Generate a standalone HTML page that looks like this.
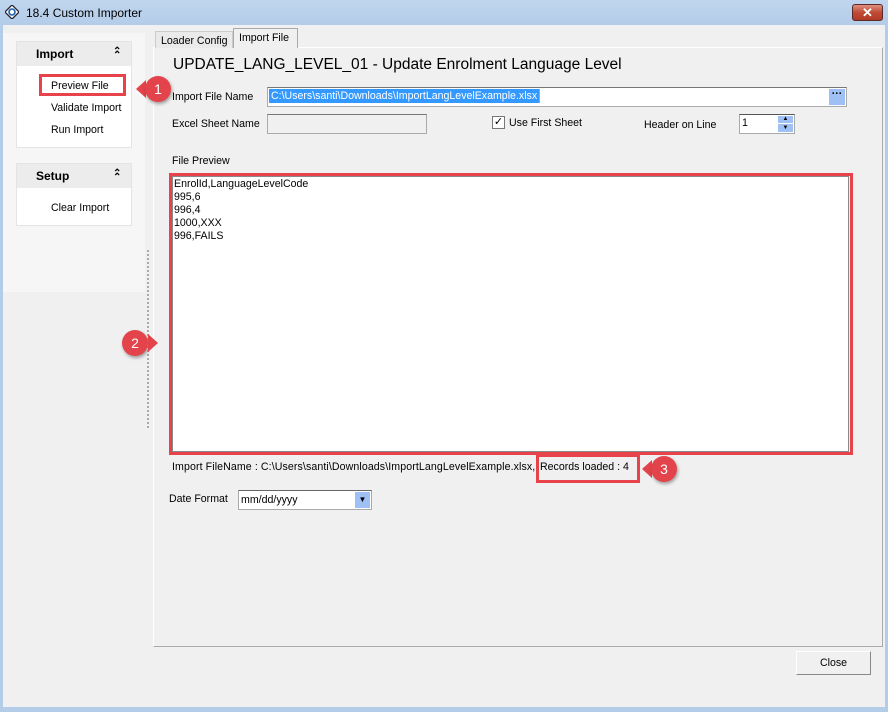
<!DOCTYPE html>
<html><head><style>
*{margin:0;padding:0;box-sizing:border-box}
body{width:888px;height:712px;background:#f0f0f0;font-family:"Liberation Sans",sans-serif;font-size:10.6px;color:#000;position:relative;overflow:hidden}
.a{position:absolute}
.red{position:absolute;border:3px solid #e8434a;z-index:5}
.badge{position:absolute;width:26px;height:26px;border-radius:50%;background:#e3434b;color:#fff;font-size:14px;text-align:center;line-height:26px;box-shadow:1px 2px 3px rgba(0,0,0,.35);z-index:6}
.tri{position:absolute;width:0;height:0;border-top:9px solid transparent;border-bottom:9px solid transparent;border-right:10px solid #e3434b;z-index:6}
</style></head><body>
<div class="a" style="left:0;top:0;width:888px;height:25px;background:linear-gradient(#c0d6ee,#b3cce8)"></div>
<div class="a" style="left:885px;top:25px;width:3px;height:687px;background:#b3cce8"></div>
<div class="a" style="left:0;top:25px;width:3px;height:687px;background:#b3cce8"></div>
<div class="a" style="left:0;top:707px;width:888px;height:5px;background:#b3cce8"></div>
<svg class="a" style="left:5px;top:5px" width="14" height="14" viewBox="0 0 14 14"><rect x="2" y="2" width="10" height="10" transform="rotate(45 7 7)" fill="#fff" stroke="#223" stroke-width="1.3"/><circle cx="7" cy="7" r="3" fill="none" stroke="#1a5fa8" stroke-width="1.6"/></svg>
<div class="a" style="left:26px;top:6px;font-size:12px">18.4 Custom Importer</div>
<div class="a" style="left:852px;top:4px;width:31px;height:17px;border:1px solid #5a2a2a;border-radius:3px;background:linear-gradient(#e09080,#c04a36 50%,#b03a26);color:#fff;font-weight:bold;text-align:center;line-height:15px;font-size:13px">✕</div>

<div class="a" style="left:3px;top:33px;width:142px;height:259px;background:#f6f6f6"></div>
<div class="a" style="left:16px;top:41px;width:116px;height:107px;background:#fff;border:1px solid #e4e4e4"></div>
<div class="a" style="left:17px;top:42px;width:114px;height:24px;background:#ececec"></div>
<div class="a" style="left:36px;top:47px;font-weight:bold;font-size:12px">Import</div>
<div class="a" style="left:113px;top:46px;font-size:10px;font-weight:bold">⌃</div>
<div class="a" style="left:113px;top:50px;font-size:10px;font-weight:bold">⌃</div>
<div class="a" style="left:51px;top:80px">Preview File</div>
<div class="a" style="left:51px;top:102px">Validate Import</div>
<div class="a" style="left:51px;top:124px">Run Import</div>
<div class="red" style="left:39px;top:74px;width:87px;height:22px"></div>
<div class="tri" style="left:136px;top:80px"></div>
<div class="badge" style="left:145px;top:76px">1</div>
<div class="a" style="left:16px;top:163px;width:116px;height:63px;background:#fff;border:1px solid #e4e4e4"></div>
<div class="a" style="left:17px;top:164px;width:114px;height:24px;background:#ececec"></div>
<div class="a" style="left:36px;top:169px;font-weight:bold;font-size:12px">Setup</div>
<div class="a" style="left:113px;top:168px;font-size:10px;font-weight:bold">⌃</div>
<div class="a" style="left:113px;top:172px;font-size:10px;font-weight:bold">⌃</div>
<div class="a" style="left:51px;top:202px">Clear Import</div>
<div class="a" style="left:147px;top:250px;height:178px;border-left:2px dotted #aaa"></div>

<div class="a" style="left:153px;top:47px;width:730px;height:600px;border:1px solid #aaa;border-top-color:#fff;border-left-color:#fff;background:#f0f0f0"></div>
<div class="a" style="left:155px;top:31px;width:78px;height:17px;border:1px solid #ccc;border-bottom:none;background:#eaeaea;padding:3px 0 0 5px">Loader Config</div>
<div class="a" style="left:233px;top:28px;width:65px;height:20px;border:1px solid #aaa;border-bottom:none;background:#f0f0f0;padding:3px 0 0 5px">Import File</div>
<div class="a" style="left:173px;top:56px;font-size:15.5px">UPDATE_LANG_LEVEL_01 - Update Enrolment Language Level</div>
<div class="a" style="left:172px;top:91px">Import File Name</div>
<div class="a" style="left:267px;top:87px;width:580px;height:20px;background:#fff;border:1px solid #aaa;border-top-color:#777"></div>
<div class="a" style="left:269px;top:89px;background:#3399ff;color:#fff;padding:1px 2px;border-right:1px solid #f90">C:\Users\santi\Downloads\ImportLangLevelExample.xlsx</div>
<div class="a" style="left:829px;top:89px;width:16px;height:16px;background:#9ec0f5;font-weight:bold;text-align:center;line-height:10px">···</div>
<div class="a" style="left:172px;top:118px">Excel Sheet Name</div>
<div class="a" style="left:267px;top:114px;width:160px;height:20px;background:#f0f0f0;border:1px solid #aaa;border-top-color:#777"></div>
<div class="a" style="left:492px;top:116px;width:13px;height:13px;border:1px solid #777;background:#fff;font-size:11px;line-height:11px;text-align:center">✓</div>
<div class="a" style="left:509px;top:117px">Use First Sheet</div>
<div class="a" style="left:644px;top:119px">Header on Line</div>
<div class="a" style="left:739px;top:114px;width:56px;height:20px;background:#fff;border:1px solid #aaa;border-top-color:#555;padding:2px 0 0 2px">1</div>
<div class="a" style="left:778px;top:116px;width:15px;height:7px;background:#9ec0f5;font-size:6px;text-align:center;line-height:7px">▲</div>
<div class="a" style="left:778px;top:124px;width:15px;height:8px;background:#9ec0f5;font-size:6px;text-align:center;line-height:8px">▼</div>
<div class="a" style="left:172px;top:155px">File Preview</div>
<div class="a" style="left:172px;top:176px;width:677px;height:276px;background:#fff;border:1px solid #888"></div>
<div class="a" style="left:174px;top:178px;line-height:13px">EnrolId,LanguageLevelCode<br>995,6<br>996,4<br>1000,XXX<br>996,FAILS</div>
<div class="red" style="left:169px;top:173px;width:684px;height:282px"></div>
<div class="badge" style="left:122px;top:330px">2</div>
<div class="tri" style="left:148px;top:334px;border-right:none;border-left:10px solid #e3434b"></div>
<div class="a" style="left:172px;top:461px;font-size:10.6px;letter-spacing:0.1px">Import FileName : C:\Users\santi\Downloads\ImportLangLevelExample.xlsx,</div>
<div class="a" style="left:540px;top:461px;font-size:10.6px">Records loaded : 4</div>
<div class="red" style="left:536px;top:454px;width:104px;height:29px"></div>
<div class="tri" style="left:642px;top:460px"></div>
<div class="badge" style="left:651px;top:456px">3</div>
<div class="a" style="left:169px;top:493px">Date Format</div>
<div class="a" style="left:238px;top:490px;width:134px;height:20px;background:#fff;border:1px solid #aaa;border-top-color:#666;padding:3px 0 0 2px">mm/dd/yyyy</div>
<div class="a" style="left:355px;top:492px;width:15px;height:16px;background:#9ec0f5;font-size:8px;text-align:center;line-height:16px">▼</div>
<div class="a" style="left:796px;top:651px;width:75px;height:24px;border:1px solid #888;border-top-color:#fff;border-left-color:#fff;background:#f0f0f0;text-align:center;line-height:22px">Close</div>
</body></html>
